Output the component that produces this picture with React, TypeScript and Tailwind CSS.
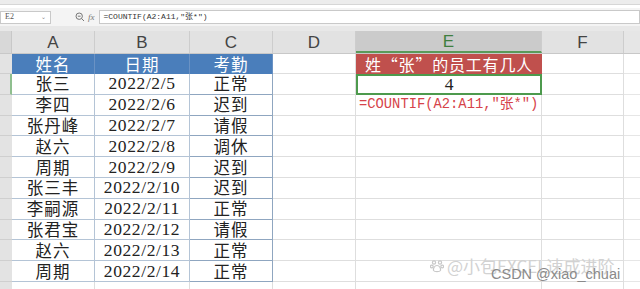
import React from "react";

const ROWS: [string, string, string][] = [
  ["张三", "2022/2/5", "正常"],
  ["李四", "2022/2/6", "迟到"],
  ["张丹峰", "2022/2/7", "请假"],
  ["赵六", "2022/2/8", "调休"],
  ["周期", "2022/2/9", "迟到"],
  ["张三丰", "2022/2/10", "迟到"],
  ["李嗣源", "2022/2/11", "正常"],
  ["张君宝", "2022/2/12", "请假"],
  ["赵六", "2022/2/13", "正常"],
  ["周期", "2022/2/14", "正常"],
];

const cjk = "font-['Noto_Sans_CJK_SC',sans-serif]";
const serif = "font-['Liberation_Serif','Noto_Sans_CJK_SC',serif]";
const cols = "grid grid-cols-[12px_83px_95px_83px_83px_186px_82px_1fr] overflow-hidden leading-[19px]";

function RowHead({ last }: { last?: boolean }) {
  return <div className={"bg-[#e3e3e3] border-b border-[#cfcfcf] " + (last ? "border-r-2 border-r-[#8fbf8f]" : "")} />;
}

export default function App() {
  return (
    <div className="relative w-[640px] h-[289px] overflow-hidden bg-white">
      {/* toolbar edge */}
      <div className="h-[5px] bg-[#ececec] border-b border-[#d6d6d6]" />
      {/* formula bar */}
      <div className="flex items-center h-[18px] bg-[#f4f4f4] mt-[3px]">
        <div className="flex items-center justify-between w-[51px] h-[13px] bg-white border border-[#c9c9c9] px-[4px] text-[8px] leading-none text-[#555] font-['Liberation_Serif',serif]">
          <span>E2</span>
          <span className="text-[6px] text-[#888]">⌄</span>
        </div>
        <svg className="ml-[24px]" width="10" height="10" viewBox="0 0 10 10">
          <circle cx="4.2" cy="4.2" r="3.2" fill="none" stroke="#777" strokeWidth="1" />
          <path d="M6.5 6.5 L9 9 M2.8 4.2 H5.6" stroke="#777" strokeWidth="1" />
        </svg>
        <span className="ml-[3px] italic text-[9px] leading-none text-[#777] font-['Liberation_Serif',serif]">fx</span>
        <div className={"ml-[4px] flex-1 h-[14px] bg-white border border-[#c9c9c9] px-[4px] flex items-center text-[8px] leading-none text-[#333] font-['Liberation_Mono','Noto_Sans_CJK_SC',monospace]"}>
          =COUNTIF(A2:A11,"张*")
        </div>
      </div>
      <div className="h-[5px] bg-[#e8e8e8]" />
      {/* column headers */}
      <div className={cols + " h-[23px] bg-[#e2e2e2] text-[17px] text-[#444] font-['Liberation_Sans',sans-serif] border-b border-[#c8c8c8]"}>
        <div className="bg-[#d8d8d8] border-r border-[#c8c8c8]" />
        {["A", "B", "C", "D"].map((c) => (
          <div key={c} className="flex items-center justify-center border-r border-[#cdcdcd]">{c}</div>
        ))}
        <div className="flex items-center justify-center bg-[#cbcbcb] text-[#3f7f3f] border-r border-[#cdcdcd] border-b-2 border-b-[#5a9a5a]">E</div>
        <div className="flex items-center justify-center border-r border-[#cdcdcd]">F</div>
        <div className="bg-[#e6e6e6]" />
      </div>
      {/* header row */}
      <div className={cols + " h-[20px] grid-rows-[20px]"}>
        <RowHead />
        {["姓名", "日期", "考勤"].map((h) => (
          <div key={h} className={"flex items-center justify-center bg-[#4a7ebb] text-white text-[16.5px] tracking-[1px] border-r border-[#6a92c4] " + cjk}>{h}</div>
        ))}
        <div className="border-r border-b border-[#dedede]" />
        <div className={"flex items-center justify-center bg-[#c0504d] text-white text-[16px] tracking-[0.8px] " + cjk}>姓“张”的员工有几人</div>
        <div className="border-r border-b border-[#dedede]" />
        <div className="border-b border-[#e6e6e6]" />
      </div>
      {ROWS.map((r, i) => (
        <div key={i} className={cols + " h-[20.8px] grid-rows-[20.8px]"}>
          <RowHead last={i === 0} />
          <div className={"flex items-center justify-center text-[#222] text-[16.5px] tracking-[1px] border-r border-b border-[#b4c4d6] " + cjk}>{r[0]}</div>
          <div className={"flex items-center justify-center text-[#222] text-[17.5px] tracking-[0.6px] border-r border-b border-[#b4c4d6] " + serif}>{r[1]}</div>
          <div className={"flex items-center justify-center text-[#222] text-[16.5px] tracking-[1px] border-r border-b border-[#8fa6c0] " + cjk}>{r[2]}</div>
          <div className="border-r border-b border-[#dedede]" />
          {i === 0 ? (
            <div className={"flex items-center justify-center text-[#222] text-[17.5px] border-2 border-[#4d9a4d] " + serif}>4</div>
          ) : i === 1 ? (
            <div className="flex items-center pl-[3px] whitespace-nowrap text-[#d6434a] text-[13.8px] border-r border-b border-[#dedede] font-['Liberation_Mono','Noto_Sans_CJK_SC',monospace]">=COUNTIF(A2:A11,"张*")</div>
          ) : (
            <div className="border-r border-b border-[#dedede]" />
          )}
          <div className="border-r border-b border-[#dedede]" />
          <div className="border-b border-[#e6e6e6]" />
        </div>
      ))}
      <div className={cols + " h-[20px]"}>
        <RowHead />
        <div className="border-r border-[#dedede]" />
        <div className="border-r border-[#dedede]" />
        <div className="border-r border-[#dedede]" />
        <div className="border-r border-[#dedede]" />
        <div className="border-r border-[#dedede]" />
        <div className="border-r border-[#dedede]" />
        <div />
      </div>
      {/* watermarks */}
      <div className={"absolute left-[430px] top-[257px] flex items-center gap-[3px] text-[17px] leading-none text-[#d2d2d2] " + cjk}>
        <svg width="14" height="14" viewBox="0 0 14 14" fill="none" stroke="#c8c8c8" strokeWidth="1.2">
          <circle cx="4" cy="3.5" r="1.6" />
          <circle cx="10" cy="3.5" r="1.6" />
          <circle cx="1.8" cy="7.5" r="1.4" />
          <circle cx="12.2" cy="7.5" r="1.4" />
          <path d="M7 6.5 C4.5 6.5 3 9.5 3.5 11.5 C4.5 13 9.5 13 10.5 11.5 C11 9.5 9.5 6.5 7 6.5 Z" />
        </svg>
        <span>@小包EXCEL速成进阶</span>
      </div>
      <div className="absolute left-[491px] top-[267px] text-[14.5px] leading-none text-[#8a8a8a] font-['Liberation_Sans',sans-serif]">CSDN @xiao_chuai</div>
    </div>
  );
}
